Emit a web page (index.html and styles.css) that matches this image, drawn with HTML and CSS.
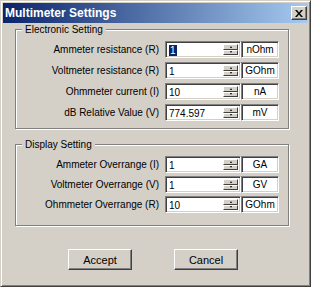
FILE: index.html
```html
<!DOCTYPE html>
<html lang="en">
<head>
  <meta charset="UTF-8">
  <title>Multimeter Settings</title>
  <link rel="stylesheet" href="styles.css">
</head>
<body>
  <div class="window">
    <div class="titlebar">
      <span class="title">Multimeter Settings</span>
      <span class="close">
        <svg width="8" height="7" viewBox="0 0 8 7"><path d="M0 0h2l2 2.5L6 0h2L5 3.5 8 7H6L4 4.5 2 7H0l3-3.5z" fill="#000"/></svg>
      </span>
    </div>
    <div class="content">
      <div class="group">
        <span class="group-title">Electronic Setting</span>
        <div class="rows">
          <div class="row">
            <span class="label">Ammeter resistance (R)</span>
            <span class="spin"><span class="value"><span class="selected">1</span></span><span class="arrows"><i class="up"></i><i class="down"></i></span></span>
            <span class="unit">nOhm</span>
          </div>
          <div class="row">
            <span class="label">Voltmeter resistance (R)</span>
            <span class="spin"><span class="value">1</span><span class="arrows"><i class="up"></i><i class="down"></i></span></span>
            <span class="unit">GOhm</span>
          </div>
          <div class="row">
            <span class="label">Ohmmeter current (I)</span>
            <span class="spin"><span class="value">10</span><span class="arrows"><i class="up"></i><i class="down"></i></span></span>
            <span class="unit">nA</span>
          </div>
          <div class="row">
            <span class="label">dB Relative Value (V)</span>
            <span class="spin"><span class="value">774.597</span><span class="arrows"><i class="up"></i><i class="down"></i></span></span>
            <span class="unit">mV</span>
          </div>
        </div>
      </div>

      <div class="group group-display">
        <span class="group-title">Display Setting</span>
        <div class="rows">
          <div class="row">
            <span class="label">Ammeter Overrange (I)</span>
            <span class="spin"><span class="value">1</span><span class="arrows"><i class="up"></i><i class="down"></i></span></span>
            <span class="unit">GA</span>
          </div>
          <div class="row">
            <span class="label">Voltmeter Overrange (V)</span>
            <span class="spin"><span class="value">1</span><span class="arrows"><i class="up"></i><i class="down"></i></span></span>
            <span class="unit">GV</span>
          </div>
          <div class="row">
            <span class="label">Ohmmeter Overrange (R)</span>
            <span class="spin"><span class="value">10</span><span class="arrows"><i class="up"></i><i class="down"></i></span></span>
            <span class="unit">GOhm</span>
          </div>
        </div>
      </div>

      <div class="buttons">
        <span class="btn">Accept</span>
        <span class="btn">Cancel</span>
      </div>
    </div>
  </div>
</body>
</html>
```

FILE: styles.css
```css
body {
  margin: 0;
  font-family: "Liberation Sans", Arial, sans-serif;
  font-size: 10px;
  color: #000;
}

.window {
  width: 311px;
  height: 287px;
  box-sizing: border-box;
  padding: 2px;
  background: #d4d0c8;
  border: 1px solid;
  border-color: #d4d0c8 #404040 #404040 #d4d0c8;
  box-shadow: inset 1px 1px #fff, inset -1px -1px #808080;
}

.titlebar {
  height: 20px;
  display: flex;
  align-items: center;
  justify-content: space-between;
  padding: 0 1px 0 2px;
  background: linear-gradient(to right, #0a246a, #a6caf0);
}
.title { color: #fff; font-weight: bold; font-size: 12px; }

.close {
  width: 16px;
  height: 14px;
  box-sizing: border-box;
  display: flex;
  align-items: center;
  justify-content: center;
  background: #d4d0c8;
  border: 1px solid;
  border-color: #fff #404040 #404040 #fff;
  box-shadow: inset -1px -1px #808080;
}

.content { padding: 6px 0 0 12px; }

/* etched group box */
.group {
  width: 274px;
  box-sizing: border-box;
  padding-bottom: 7px;
  border: 1px solid #808080;
  box-shadow: inset 1px 1px #fff, 1px 1px #fff;
}
.group-display { margin-top: 15px; padding-bottom: 12px; }
.group-title {
  display: block;
  width: fit-content;
  margin: -7px 0 0 6px;
  padding: 0 3px;
  line-height: 13px;
  background: #d4d0c8;
}

.rows {
  display: flex;
  flex-direction: column;
  gap: 4px;
  margin-top: 5px;
}
.group-display .rows { gap: 3px; }

.row { display: flex; align-items: center; height: 17px; }
.label { width: 143px; margin-right: 6px; text-align: right; }

.sunken {
  box-sizing: border-box;
  border: 1px solid;
  border-color: #808080 #fff #fff #808080;
}
.spin, .unit {
  height: 17px;
  box-sizing: border-box;
  border: 1px solid;
  border-color: #808080 #fff #fff #808080;
  box-shadow: inset 1px 1px #404040, inset -1px -1px #d4d0c8;
  background: #fff;
}
.spin { width: 76px; display: flex; padding: 2px; }
.value { flex: 1; line-height: 13px; padding-left: 1px; }
.selected { background: #0a246a; color: #fff; padding: 0 1px; }

.arrows { width: 15px; display: flex; flex-direction: column; }
.arrows i {
  flex: 1;
  display: flex;
  align-items: center;
  justify-content: center;
  background: #d4d0c8;
  border: 1px solid;
  border-color: #fff #404040 #404040 #fff;
}
.arrows i::after {
  content: "";
  border-left: 1.5px solid transparent;
  border-right: 1.5px solid transparent;
}
.arrows .up::after { border-bottom: 2px solid #000; }
.arrows .down::after { border-top: 2px solid #000; }

.unit {
  width: 38px;
  text-align: center;
  line-height: 13px;
  padding-top: 1px;
}

.buttons {
  display: flex;
  gap: 42px;
  margin: 23px 0 0 53px;
}
.btn {
  width: 64px;
  height: 21px;
  box-sizing: border-box;
  display: flex;
  align-items: center;
  justify-content: center;
  font-size: 11px;
  border: 1px solid;
  border-color: #fff #404040 #404040 #fff;
  box-shadow: inset -1px -1px #808080;
}
```
